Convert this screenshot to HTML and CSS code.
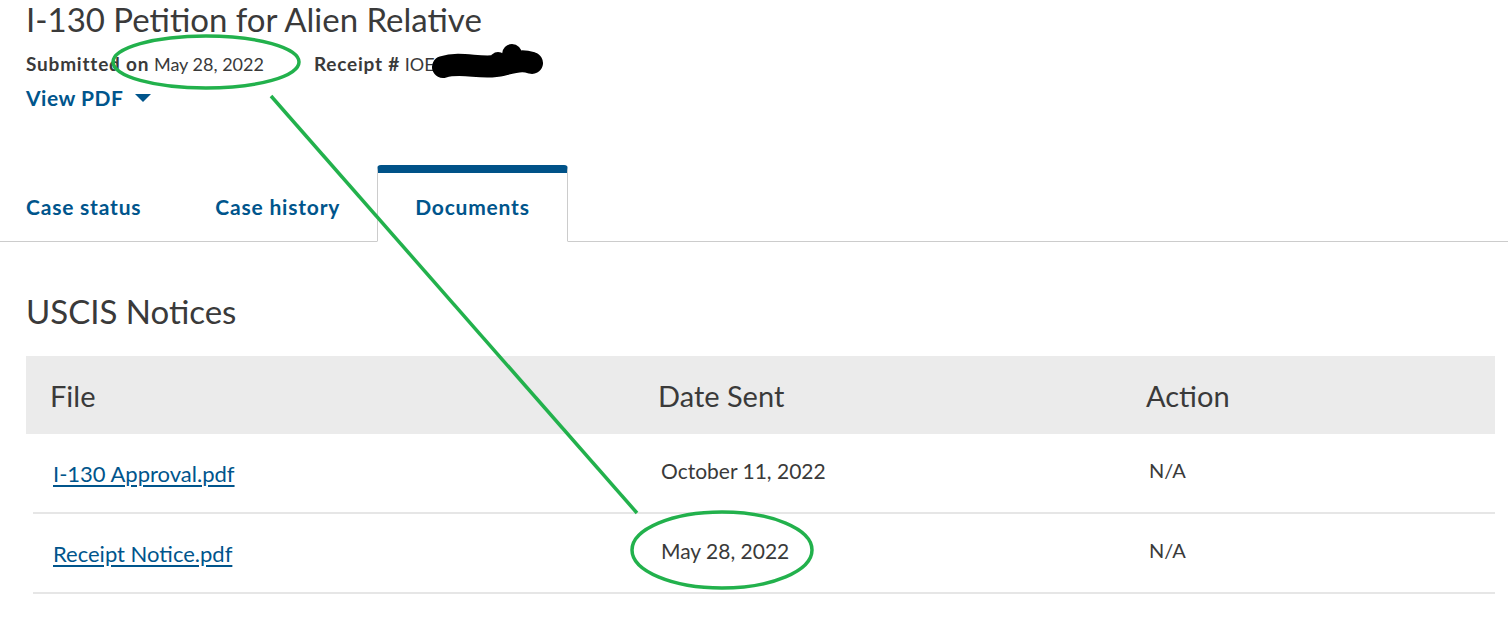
FILE: index.html
```html
<!DOCTYPE html>
<html lang="en">
<head>
<meta charset="utf-8">
<title>I-130 Petition for Alien Relative</title>
<link rel="stylesheet" href="styles.css">
</head>
<body>
<div class="page">
  <header class="case-head">
    <h1 class="title">I-130 Petition for Alien Relative</h1>
    <div class="meta">
      <span class="meta-item"><b>Submitted on</b> May 28, 2022</span>
      <span class="meta-item"><b>Receipt #</b> IOE</span>
    </div>
    <a class="view-pdf" href="#">View PDF
      <svg class="caret" width="16" height="10" viewBox="0 0 16 10"><path d="M0 1 L16 1 L8 9 Z" fill="#00558c"/></svg>
    </a>
  </header>

  <nav class="tabs">
    <a class="tab" href="#">Case status</a>
    <a class="tab" href="#">Case history</a>
    <a class="tab active" href="#">Documents</a>
  </nav>

  <section class="docs">
    <h2 class="docs-title">USCIS Notices</h2>
    <div class="table">
      <div class="thead">
        <div class="th">File</div>
        <div class="th">Date Sent</div>
        <div class="th">Action</div>
      </div>
      <div class="row">
        <div class="td"><a class="file-link" href="#">I-130 Approval.pdf</a></div>
        <div class="td date">October 11, 2022</div>
        <div class="td na">N/A</div>
      </div>
      <div class="row">
        <div class="td"><a class="file-link" href="#">Receipt Notice.pdf</a></div>
        <div class="td date">May 28, 2022</div>
        <div class="td na">N/A</div>
      </div>
    </div>
  </section>

  <svg class="annotations" width="1508" height="622" viewBox="0 0 1508 622">
    <g fill="none" stroke="#22b14c" stroke-width="3.5">
      <ellipse cx="206" cy="62" rx="93" ry="26"/>
      <line x1="271" y1="96" x2="637" y2="513"/>
      <ellipse cx="722" cy="550" rx="90" ry="38"/>
    </g>
    <g fill="#000" stroke="#000" stroke-linecap="round" stroke-linejoin="round">
      <path d="M443 67 C 462 61, 482 70, 502 65 S 525 61, 532 63" fill="none" stroke-width="22"/>
      <circle cx="512" cy="54" r="10" stroke="none"/>
      <circle cx="498" cy="60" r="8" stroke="none"/>
    </g>
  </svg>
</div>
</body>
</html>
```

FILE: styles.css
```css
* { box-sizing: border-box; }

html, body {
  margin: 0;
  padding: 0;
  background: #ffffff;
}

body {
  font-family: "Source Sans Pro", Lato, "Liberation Sans", sans-serif;
  color: #333333;
}

.page {
  position: relative;
  width: 1508px;
  height: 622px;
  overflow: hidden;
}

.case-head {
  padding-left: 26px;
}

.title {
  margin: 0;
  font-size: 33px;
  line-height: 38px;
  font-weight: 400;
  color: #3a3a3a;
}

.meta {
  margin-top: 14px;
  display: flex;
  gap: 50px;
  font-size: 18px;
  line-height: 24px;
  color: #3a3a3a;
}

.meta b {
  font-weight: 700;
  font-size: 19px;
  letter-spacing: 0.8px;
}

.view-pdf {
  margin-top: 9px;
  display: inline-flex;
  align-items: center;
  gap: 12px;
  font-size: 21px;
  line-height: 26px;
  font-weight: 700;
  letter-spacing: 0.5px;
  color: #00558c;
  text-decoration: none;
}

.tabs {
  margin-top: 54px;
  display: flex;
  padding-left: 26px;
  border-bottom: 1px solid #cccccc;
}

.tab {
  height: 77px;
  margin-bottom: -1px;
  padding: 0 37px 2px;
  display: flex;
  align-items: center;
  border-top: 8px solid transparent;
  font-size: 21px;
  font-weight: 700;
  letter-spacing: 0.8px;
  color: #00558c;
  text-decoration: none;
}

.tab:first-child { padding-left: 0; }

.tab.active {
  border: 1px solid #cccccc;
  border-top: 8px solid #005288;
  border-bottom: 1px solid #ffffff;
  border-radius: 4px 4px 0 0;
  background: #ffffff;
}

.docs {
  padding-left: 26px;
  padding-right: 13px;
}

.docs-title {
  margin: 49px 0 25px;
  font-size: 33px;
  line-height: 40px;
  font-weight: 400;
  color: #3a3a3a;
}

.thead {
  display: grid;
  grid-template-columns: 608px 488px 1fr;
  height: 78px;
  align-items: center;
  background: #ebebeb;
}

.th {
  padding-left: 24px;
  font-size: 29px;
  color: #3a3a3a;
}

.row {
  display: grid;
  grid-template-columns: 608px 488px 1fr;
  height: 80px;
  margin-left: 7px;
  align-items: center;
  border-bottom: 2px solid #e6e6e6;
}

.td {
  padding-left: 20px;
  font-size: 21px;
  color: #3a3a3a;
}

.td.date { margin-top: -6px; }
.td.na { margin-top: -6px; font-size: 20px; }

.file-link {
  font-size: 22px;
  color: #00558c;
  text-decoration: underline;
  text-underline-offset: 3px;
}

.annotations {
  position: absolute;
  left: 0;
  top: 0;
  pointer-events: none;
}
```
